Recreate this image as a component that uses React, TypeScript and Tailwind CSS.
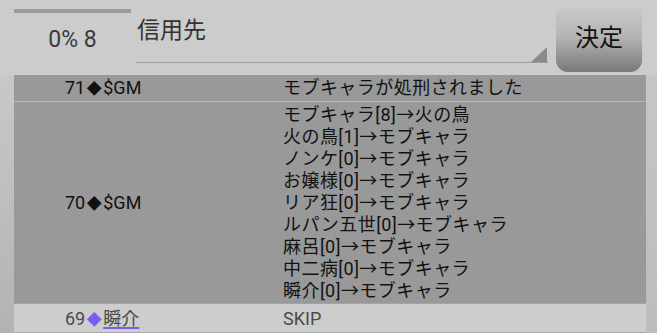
import React from "react";

const font = { fontFamily: 'Roboto, "Noto Sans CJK JP", sans-serif' };

const moves = [
  "モブキャラ[8]→火の鳥",
  "火の鳥[1]→モブキャラ",
  "ノンケ[0]→モブキャラ",
  "お嬢様[0]→モブキャラ",
  "リア狂[0]→モブキャラ",
  "ルパン五世[0]→モブキャラ",
  "麻呂[0]→モブキャラ",
  "中二病[0]→モブキャラ",
  "瞬介[0]→モブキャラ",
];

function Dia({ color = "text-[#111]" }: { color?: string }) {
  return <span className={`text-[15px] mx-[1.5px] ${color}`}>◆</span>;
}

export default function App() {
  return (
    <div
      className="w-[657px] h-[333px] overflow-hidden bg-[#cccccc] flex flex-col"
      style={font}
    >
      {/* header */}
      <div className="flex h-[75px] shrink-0">
        <div className="ml-[14px] w-[117px] flex flex-col">
          <div className="mt-[9px] h-[4px] bg-[#9b9b9b]" />
          <div className="mt-[13px] text-center text-[23px] leading-[27px] text-[#3a3a3a]">
            0% 8
          </div>
        </div>
        <div className="ml-[5px] w-[412px] h-[63px] relative border-b-[1.5px] border-[#9c9c9c]">
          <div className="pl-[1px] pt-[17px] text-[23px] leading-[27px] text-[#333]">
            信用先
          </div>
          <div className="absolute right-[1px] bottom-0 w-0 h-0 border-l-[16px] border-l-transparent border-b-[15px] border-b-[#8a8a8a]" />
        </div>
        <button className="ml-[8px] mt-[3px] w-[86px] h-[69px] rounded-[12px] bg-linear-to-b from-[#cdcdcd] via-[#b3b3b3] to-[#797979] text-[24px] text-[#111] flex items-center justify-center">
          決定
        </button>
      </div>

      {/* body */}
      <div className="flex flex-1">
        <div className="w-[14px] bg-linear-to-b from-[#c8c8c8] to-[#b3b3b3]" />
        <div className="w-[632px] flex flex-col text-[18px] leading-[22px]">
          <div className="flex bg-[#999999] pt-[2px] pb-[1px] border-b border-[#bababa] text-[#111]">
            <div className="w-[269px] pl-[51px]">
              71<Dia />$GM
            </div>
            <div className="tracking-[0.45px]">モブキャラが処刑されました</div>
          </div>
          <div className="flex bg-[#999999] pt-[2px] pb-[1px] border-b border-[#a4a4a4] text-[#111]">
            <div className="w-[269px] pl-[51px] flex items-center">
              <span>
                70<Dia />$GM
              </span>
            </div>
            <div className="flex flex-col tracking-[0.45px]">
              {moves.map((m) => (
                <div key={m}>{m}</div>
              ))}
            </div>
          </div>
          <div className="flex bg-[#cdcdcd] pt-[4px] pb-[1px] border-b border-[#a9a9a9] text-[#4a4a4a]">
            <div className="w-[269px] pl-[51px]">
              69<Dia color="text-[#7b5cf0]" />
              <span className="underline decoration-[#7b5cf0] decoration-2 underline-offset-[2px]">
                瞬介
              </span>
            </div>
            <div>SKIP</div>
          </div>
          <div className="flex-1 bg-[#cdcdcd]" />
        </div>
        <div className="flex-1 bg-linear-to-b from-[#c6c6c6] to-[#bcbcbc]" />
      </div>
    </div>
  );
}
